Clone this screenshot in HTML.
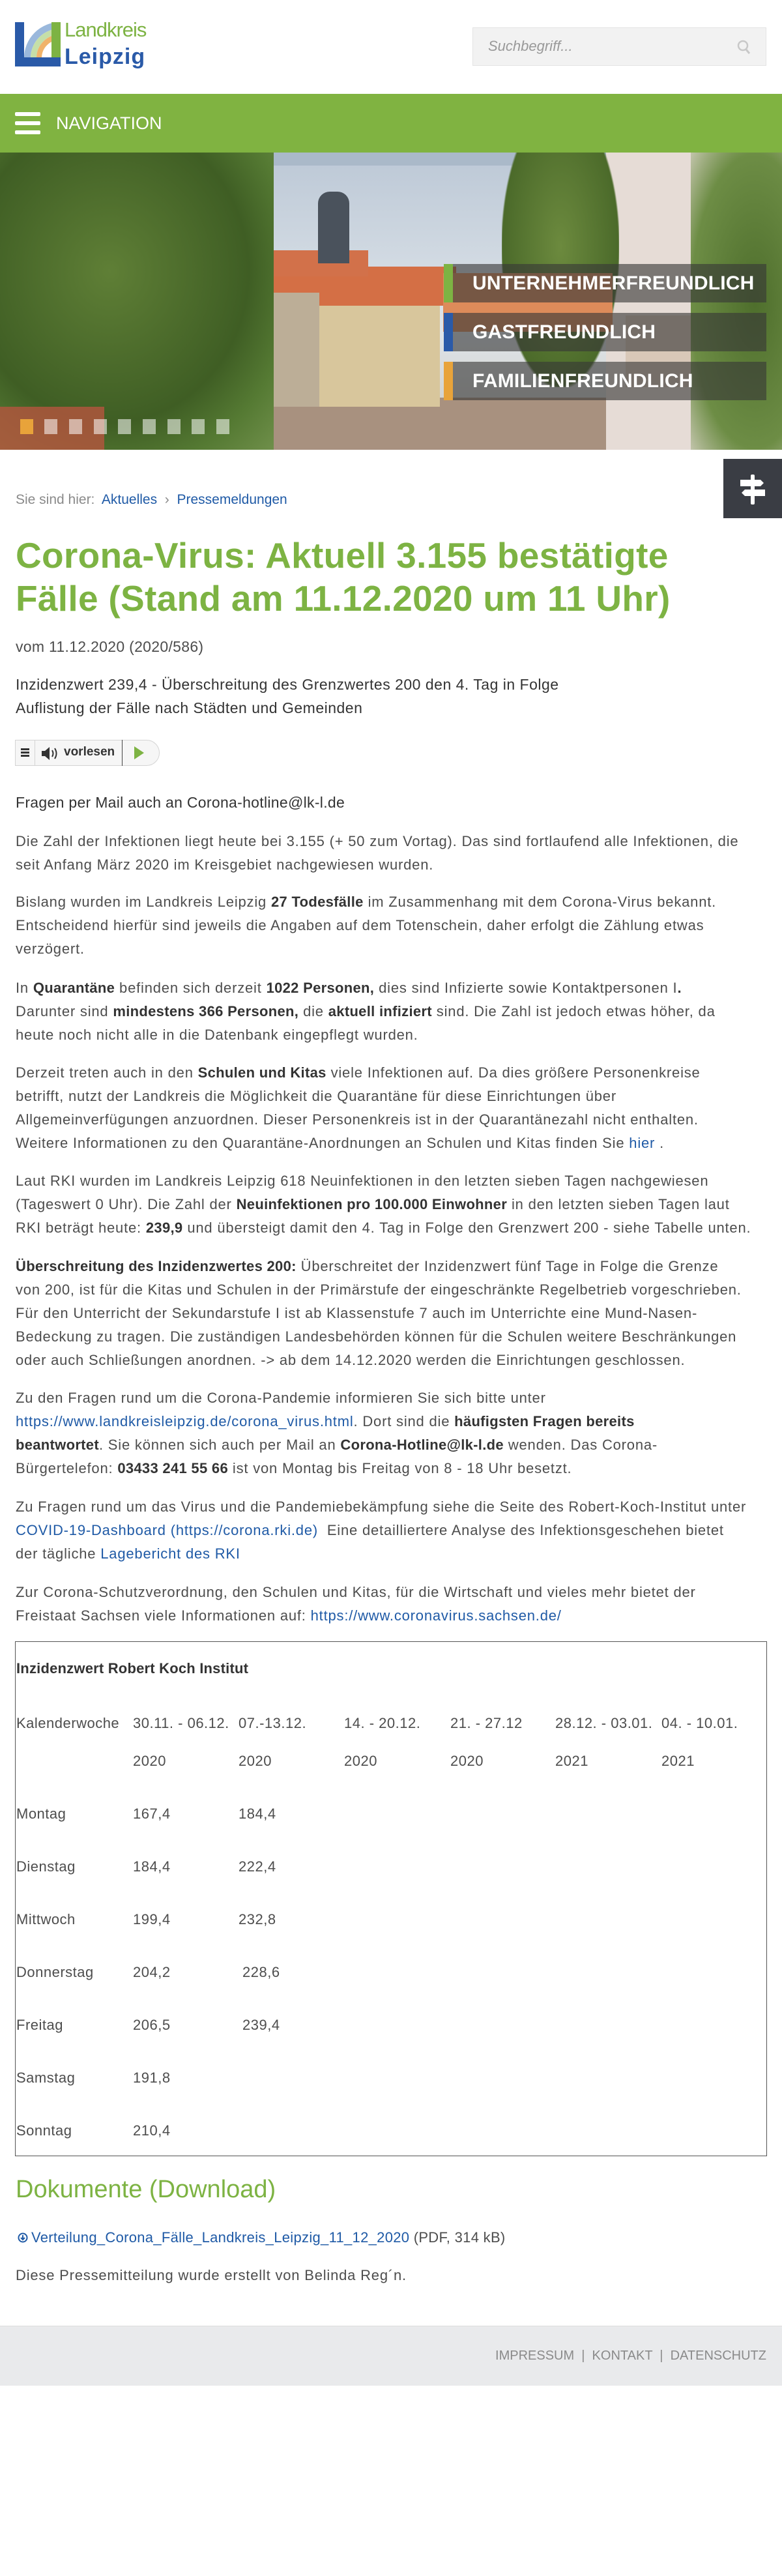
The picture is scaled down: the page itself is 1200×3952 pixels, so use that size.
<!DOCTYPE html>
<html><head><meta charset="utf-8">
<style>
*{margin:0;padding:0;box-sizing:border-box}
html,body{width:1200px;height:3952px;background:#fff;overflow:hidden}
body{position:relative;font-family:"Liberation Sans",sans-serif;color:#4a4a4a}
.abs{position:absolute}
.p{position:absolute;left:24px;font-size:22px;letter-spacing:0.8px;line-height:36px;white-space:nowrap;color:#4d4d4d}
.p b{color:#333;letter-spacing:0.3px}
a{color:#1f5aa6;text-decoration:none}
.lab{position:absolute;left:681px;width:495px;height:59px;background:rgba(55,55,55,.62);color:#fff;font-weight:bold;font-size:30px;line-height:59px;padding-left:44px;letter-spacing:.2px}
.lab i{position:absolute;left:0;top:0;width:14px;height:59px}
.td{position:absolute;font-size:22px;letter-spacing:0.5px;white-space:nowrap;color:#4d4d4d}
</style></head><body>

<!-- header -->
<div class="abs" style="left:23px;top:34px;width:70px;height:68px;background:#2a5aa8"></div>
<div class="abs" style="left:37px;top:34px;width:56px;height:54px;background:#7db343"></div>
<div class="abs" style="left:37px;top:34px;width:42px;height:54px;background:#fff;overflow:hidden">
  <div style="position:absolute;left:0;top:0;width:110px;height:110px;border-radius:50%;border:10px solid #9ab8dc"></div>
  <div style="position:absolute;left:10px;top:10px;width:90px;height:90px;border-radius:50%;border:9px solid #c5dfa8"></div>
  <div style="position:absolute;left:19px;top:19px;width:72px;height:72px;border-radius:50%;border:8px solid #f0b36a"></div>
</div>
<div class="abs" style="left:37px;top:88px;width:56px;height:14px;background:#2a5aa8"></div>
<div class="abs" style="left:99px;top:28px;font-size:31px;color:#7db343;letter-spacing:-1px">Landkreis</div>
<div class="abs" style="left:99px;top:68px;font-size:34px;font-weight:bold;color:#2a5aa8;letter-spacing:1px">Leipzig</div>

<div class="abs" style="left:725px;top:42px;width:451px;height:59px;background:#f2f2f2;border:1px solid #e4e4e4"></div>
<div class="abs" style="left:749px;top:58px;font-size:22px;font-style:italic;color:#999">Suchbegriff...</div>
<svg class="abs" style="left:1130px;top:60px" width="24" height="26" viewBox="0 0 24 26"><circle cx="10" cy="10" r="7" fill="none" stroke="#c8c8c8" stroke-width="2.5"/><path d="M15 16l5 6" stroke="#c8c8c8" stroke-width="3"/></svg>

<!-- nav -->
<div class="abs" style="left:0;top:144px;width:1200px;height:90px;background:#80b341"></div>
<div class="abs" style="left:23px;top:172px;width:39px;height:6px;background:#fff;border-radius:2px"></div>
<div class="abs" style="left:23px;top:186px;width:39px;height:6px;background:#fff;border-radius:2px"></div>
<div class="abs" style="left:23px;top:200px;width:39px;height:6px;background:#fff;border-radius:2px"></div>
<div class="abs" style="left:86px;top:172px;font-size:27px;color:#fff;line-height:34px">NAVIGATION</div>

<!-- hero -->
<div class="abs" style="left:0;top:234px;width:1200px;height:456px;overflow:hidden;background:linear-gradient(#bcc8d6,#dfe5ea 60%,#c9c6bd)">
  <div class="abs" style="left:0;top:376px;width:1200px;height:80px;background:#a8917f"></div>
  <div class="abs" style="left:250px;top:0;width:720px;height:20px;background:#aab9c9"></div>
  <div class="abs" style="left:930px;top:0;width:270px;height:456px;background:#e6dcd6"></div>
  <div class="abs" style="left:960px;top:250px;width:240px;height:110px;background:#d9c8b8"></div>
  <div class="abs" style="left:770px;top:0;width:180px;height:360px;background:radial-gradient(ellipse at 50% 40%,#6c8a3e,#4b6a2a 70%,rgba(75,106,42,0) 72%)"></div>
  <div class="abs" style="left:320px;top:175px;width:380px;height:60px;background:#d46f45"></div>
  <div class="abs" style="left:395px;top:150px;width:170px;height:40px;background:#d2714a"></div>
  <div class="abs" style="left:488px;top:60px;width:48px;height:110px;background:#4a525c;border-radius:18px 18px 0 0"></div>
  <div class="abs" style="left:400px;top:235px;width:275px;height:155px;background:#d8c69c"></div>
  <div class="abs" style="left:400px;top:215px;width:90px;height:175px;background:#bcae97"></div>
  <div class="abs" style="left:680px;top:185px;width:260px;height:90px;background:#dd8b5a"></div>
  <div class="abs" style="left:0;top:0;width:420px;height:456px;background:radial-gradient(ellipse at 40% 40%,#5f7f36,#3f5e24 60%,#557a33 80%,#6f8f4a)"></div>
  <div class="abs" style="left:1060px;top:0;width:140px;height:456px;background:radial-gradient(ellipse at 70% 50%,#4e6e2c,#6d8d45 70%,rgba(109,141,69,.3))"></div>
  <div class="abs" style="left:0;top:390px;width:160px;height:66px;background:#b5553e;opacity:.8"></div>
  <div class="abs" style="left:31px;top:409px;width:20px;height:23px;background:#e8a33a"></div>
  <div class="abs" style="left:68px;top:409px;width:20px;height:23px;background:rgba(255,255,255,.55)"></div>
  <div class="abs" style="left:106px;top:409px;width:20px;height:23px;background:rgba(255,255,255,.55)"></div>
  <div class="abs" style="left:144px;top:409px;width:20px;height:23px;background:rgba(255,255,255,.55)"></div>
  <div class="abs" style="left:181px;top:409px;width:20px;height:23px;background:rgba(255,255,255,.55)"></div>
  <div class="abs" style="left:219px;top:409px;width:20px;height:23px;background:rgba(255,255,255,.55)"></div>
  <div class="abs" style="left:257px;top:409px;width:20px;height:23px;background:rgba(255,255,255,.55)"></div>
  <div class="abs" style="left:294px;top:409px;width:20px;height:23px;background:rgba(255,255,255,.55)"></div>
  <div class="abs" style="left:332px;top:409px;width:20px;height:23px;background:rgba(255,255,255,.55)"></div>
</div>
<div class="lab" style="top:405px"><i style="background:#7db343"></i>UNTERNEHMERFREUNDLICH</div>
<div class="lab" style="top:480px"><i style="background:#2a5aa8"></i>GASTFREUNDLICH</div>
<div class="lab" style="top:555px"><i style="background:#e8a33a"></i>FAMILIENFREUNDLICH</div>

<!-- signpost -->
<div class="abs" style="left:1110px;top:704px;width:90px;height:91px;background:#3a3d44"></div>
<svg class="abs" style="left:1133px;top:728px" width="44" height="46" viewBox="0 0 44 46"><rect x="19" y="0" width="6" height="46" rx="2" fill="#fff"/><path d="M3 8h31l5 5-5 5H3z" fill="#fff"/><path d="M41 23H10l-5 5 5 5h31z" fill="#fff"/></svg>

<!-- breadcrumb -->
<div class="abs" style="left:24px;top:755px;font-size:21px;color:#8a8a8a;white-space:nowrap">Sie sind hier:&nbsp; <a>Aktuelles</a> &nbsp;›&nbsp; <a>Pressemeldungen</a></div>

<!-- title -->
<div class="abs" style="left:24px;top:819px;font-size:55px;line-height:66px;font-weight:bold;color:#7db343;white-space:nowrap;letter-spacing:0.3px">Corona-Virus: Aktuell 3.155 bestätigte<br>Fälle (Stand am 11.12.2020 um 11 Uhr)</div>

<div class="p" style="top:974px;font-size:23px;letter-spacing:0.3px">vom 11.12.2020 (2020/586)</div>
<div class="p" style="top:1032px;font-size:23px;color:#333;letter-spacing:0.5px">Inzidenzwert 239,4 - Überschreitung des Grenzwertes 200 den 4. Tag in Folge<br>Auflistung der Fälle nach Städten und Gemeinden</div>

<!-- vorlesen -->
<div class="abs" style="left:23px;top:1135px;width:222px;height:40px;border:1px solid #d4d4d4;border-radius:0 20px 20px 0;background:#f6f6f6"></div>
<div class="abs" style="left:53px;top:1135px;width:1px;height:40px;background:#d4d4d4"></div>
<div class="abs" style="left:187px;top:1135px;width:1px;height:40px;background:#444"></div>
<div class="abs" style="left:32px;top:1148px;width:13px;height:3px;background:#333;box-shadow:0 5px 0 #333,0 10px 0 #333"></div>
<svg class="abs" style="left:63px;top:1145px" width="28" height="22" viewBox="0 0 28 22"><path d="M1 7h5l7-6v20l-7-6H1z" fill="#333"/><path d="M17 6q3 5 0 10M21 3q5 8 0 16" fill="none" stroke="#333" stroke-width="2"/></svg>
<div class="abs" style="left:98px;top:1143px;font-size:19px;font-weight:bold;color:#333">vorlesen</div>
<svg class="abs" style="left:206px;top:1145px" width="16" height="20" viewBox="0 0 16 20"><path d="M0 0l15 10-15 10z" fill="#7db343"/></svg>

<!-- body -->
<div class="p" style="top:1213px;font-size:23px;color:#333;letter-spacing:0.3px">Fragen per Mail auch an Corona-hotline@lk-l.de</div>
<div class="p" style="top:1273px">Die Zahl der Infektionen liegt heute bei 3.155 (+ 50 zum Vortag). Das sind fortlaufend alle Infektionen, die<br>seit Anfang März 2020 im Kreisgebiet nachgewiesen wurden.</div>
<div class="p" style="top:1366px">Bislang wurden im Landkreis Leipzig <b>27 Todesfälle</b> im Zusammenhang mit dem Corona-Virus bekannt.<br>Entscheidend hierfür sind jeweils die Angaben auf dem Totenschein, daher erfolgt die Zählung etwas<br>verzögert.</div>
<div class="p" style="top:1498px">In <b>Quarantäne</b> befinden sich derzeit <b>1022 Personen,</b> dies sind Infizierte sowie Kontaktpersonen I<b>.</b><br>Darunter sind <b>mindestens 366 Personen,</b> die <b>aktuell infiziert</b> sind. Die Zahl ist jedoch etwas höher, da<br>heute noch nicht alle in die Datenbank eingepflegt wurden.</div>
<div class="p" style="top:1628px">Derzeit treten auch in den <b>Schulen und Kitas</b> viele Infektionen auf. Da dies größere Personenkreise<br>betrifft, nutzt der Landkreis die Möglichkeit die Quarantäne für diese Einrichtungen über<br>Allgemeinverfügungen anzuordnen. Dieser Personenkreis ist in der Quarantänezahl nicht enthalten.<br>Weitere Informationen zu den Quarantäne-Anordnungen an Schulen und Kitas finden Sie <a>hier</a> .</div>
<div class="p" style="top:1794px">Laut RKI wurden im Landkreis Leipzig 618 Neuinfektionen in den letzten sieben Tagen nachgewiesen<br>(Tageswert 0 Uhr). Die Zahl der <b>Neuinfektionen pro 100.000 Einwohner</b> in den letzten sieben Tagen laut<br>RKI beträgt heute: <b>239,9</b> und übersteigt damit den 4. Tag in Folge den Grenzwert 200 - siehe Tabelle unten.</div>
<div class="p" style="top:1925px"><b>Überschreitung des Inzidenzwertes 200:</b> Überschreitet der Inzidenzwert fünf Tage in Folge die Grenze<br>von 200, ist für die Kitas und Schulen in der Primärstufe der eingeschränkte Regelbetrieb vorgeschrieben.<br>Für den Unterricht der Sekundarstufe I ist ab Klassenstufe 7 auch im Unterrichte eine Mund-Nasen-<br>Bedeckung zu tragen. Die zuständigen Landesbehörden können für die Schulen weitere Beschränkungen<br>oder auch Schließungen anordnen. -&gt; ab dem 14.12.2020 werden die Einrichtungen geschlossen.</div>
<div class="p" style="top:2127px">Zu den Fragen rund um die Corona-Pandemie informieren Sie sich bitte unter<br><a>https://www.landkreisleipzig.de/corona_virus.html</a>. Dort sind die <b>häufigsten Fragen bereits</b><br><b>beantwortet</b>. Sie können sich auch per Mail an <b>Corona-Hotline@lk-l.de</b> wenden. Das Corona-<br>Bürgertelefon: <b>03433 241 55 66</b> ist von Montag bis Freitag von 8 - 18 Uhr besetzt.</div>
<div class="p" style="top:2294px">Zu Fragen rund um das Virus und die Pandemiebekämpfung siehe die Seite des Robert-Koch-Institut unter<br><a>COVID-19-Dashboard (https://corona.rki.de)</a>&nbsp; Eine detailliertere Analyse des Infektionsgeschehen bietet<br>der tägliche <a>Lagebericht des RKI</a></div>
<div class="p" style="top:2425px">Zur Corona-Schutzverordnung, den Schulen und Kitas, für die Wirtschaft und vieles mehr bietet der<br>Freistaat Sachsen viele Informationen auf: <a>https://www.coronavirus.sachsen.de/</a></div>

<!-- table -->
<div class="abs" style="left:23px;top:2518px;width:1154px;height:790px;border:1px solid #555"></div>
<div class="td" style="left:25px;top:2547px;font-weight:bold;color:#333;letter-spacing:0.2px">Inzidenzwert Robert Koch Institut</div>
<div class="td" style="left:25px;top:2631px">Kalenderwoche</div>
<div class="td" style="left:204px;top:2631px">30.11. - 06.12.</div>
<div class="td" style="left:366px;top:2631px">07.-13.12.</div>
<div class="td" style="left:528px;top:2631px">14. - 20.12.</div>
<div class="td" style="left:691px;top:2631px">21. - 27.12</div>
<div class="td" style="left:852px;top:2631px">28.12. - 03.01.</div>
<div class="td" style="left:1015px;top:2631px">04. - 10.01.</div>
<div class="td" style="left:204px;top:2689px">2020</div>
<div class="td" style="left:366px;top:2689px">2020</div>
<div class="td" style="left:528px;top:2689px">2020</div>
<div class="td" style="left:691px;top:2689px">2020</div>
<div class="td" style="left:852px;top:2689px">2021</div>
<div class="td" style="left:1015px;top:2689px">2021</div>

<div class="td" style="left:25px;top:2770px">Montag</div><div class="td" style="left:204px;top:2770px">167,4</div><div class="td" style="left:366px;top:2770px">184,4</div>
<div class="td" style="left:25px;top:2851px">Dienstag</div><div class="td" style="left:204px;top:2851px">184,4</div><div class="td" style="left:366px;top:2851px">222,4</div>
<div class="td" style="left:25px;top:2932px">Mittwoch</div><div class="td" style="left:204px;top:2932px">199,4</div><div class="td" style="left:366px;top:2932px">232,8</div>
<div class="td" style="left:25px;top:3013px">Donnerstag</div><div class="td" style="left:204px;top:3013px">204,2</div><div class="td" style="left:372px;top:3013px">228,6</div>
<div class="td" style="left:25px;top:3094px">Freitag</div><div class="td" style="left:204px;top:3094px">206,5</div><div class="td" style="left:372px;top:3094px">239,4</div>
<div class="td" style="left:25px;top:3175px">Samstag</div><div class="td" style="left:204px;top:3175px">191,8</div>
<div class="td" style="left:25px;top:3256px">Sonntag</div><div class="td" style="left:204px;top:3256px">210,4</div>

<!-- documents -->
<div class="abs" style="left:24px;top:3338px;font-size:38px;color:#7db343;white-space:nowrap">Dokumente (Download)</div>
<svg class="abs" style="left:27px;top:3424px" width="16" height="18" viewBox="0 0 16 18"><circle cx="8" cy="9" r="6.5" fill="none" stroke="#1f5aa6" stroke-width="2"/><path d="M8 5v7M5 9l3 3 3-3" fill="none" stroke="#1f5aa6" stroke-width="2"/></svg>
<div class="p" style="top:3415px;left:48px;letter-spacing:0.3px"><a>Verteilung_Corona_Fälle_Landkreis_Leipzig_11_12_2020</a> (PDF, 314 kB)</div>
<div class="p" style="top:3473px">Diese Pressemitteilung wurde erstellt von Belinda Reg´n.</div>

<!-- footer -->
<div class="abs" style="left:0;top:3568px;width:1200px;height:92px;background:#e9eaec;border-top:1px solid #dcdcdc"></div>
<div class="abs" style="right:24px;top:3603px;font-size:20px;color:#8a8a8a;white-space:nowrap">IMPRESSUM &nbsp;|&nbsp; KONTAKT &nbsp;|&nbsp; DATENSCHUTZ</div>
</body></html>
